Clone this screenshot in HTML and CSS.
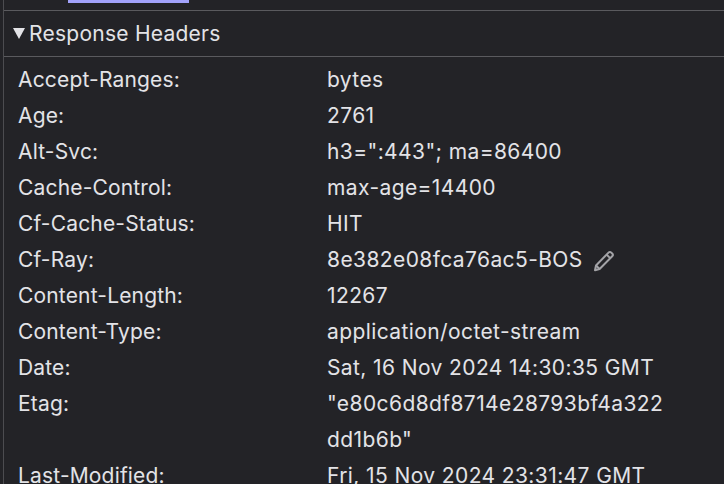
FILE: index.html
```html
<!DOCTYPE html>
<html lang="en">
<head>
<meta charset="utf-8">
<title>Response Headers</title>
<link rel="stylesheet" href="styles.css">
</head>
<body>
<div class="outer">
  <div class="tabs"><div class="tab-active"></div></div>
  <div class="section-head"><span class="tri"></span><span>Response Headers</span></div>
  <div class="rows">
    <div class="row"><div class="k">Accept-Ranges:</div><div class="v">bytes</div></div>
    <div class="row"><div class="k">Age:</div><div class="v">2761</div></div>
    <div class="row"><div class="k">Alt-Svc:</div><div class="v">h3=":443"; ma=86400</div></div>
    <div class="row"><div class="k">Cache-Control:</div><div class="v">max-age=14400</div></div>
    <div class="row"><div class="k">Cf-Cache-Status:</div><div class="v">HIT</div></div>
    <div class="row"><div class="k">Cf-Ray:</div><div class="v">8e382e08fca76ac5-BOS<svg class="pencil" width="24" height="24" viewBox="0 0 24 24" fill="none" stroke="#a3a3a7" stroke-width="2" stroke-linejoin="round"><path d="M4 16.5 16.5 3.6c.8-.8 2-.8 2.8 0l.9.9c.8.8.8 2 0 2.8L7.6 20l-4.6 1.2z"/><path d="M14.6 5.6l3.8 3.8"/><path d="M4 16.5l3.6 3.5"/></svg></div></div>
    <div class="row"><div class="k">Content-Length:</div><div class="v">12267</div></div>
    <div class="row"><div class="k">Content-Type:</div><div class="v">application/octet-stream</div></div>
    <div class="row"><div class="k">Date:</div><div class="v">Sat, 16 Nov 2024 14:30:35 GMT</div></div>
    <div class="row"><div class="k">Etag:</div><div class="v">"e80c6d8df8714e28793bf4a322<br>dd1b6b"</div></div>
    <div class="row"><div class="k">Last-Modified:</div><div class="v">Fri, 15 Nov 2024 23:31:47 GMT</div></div>
  </div>
</div>
</body>
</html>
```
FILE: styles.css
```css
html, body {
  margin: 0;
  padding: 0;
  width: 724px;
  height: 484px;
  overflow: hidden;
  background: #232327;
}
body {
  font-family: Inter, "Liberation Sans", sans-serif;
  font-size: 21px;
  color: #e3e3e7;
}
.outer {
  margin-left: 3px;
  border-left: 1px solid #4c4c50;
  height: 484px;
}
.tabs {
  height: 10px;
  border-bottom: 1px solid #5a5a5e;
  position: relative;
}
.tab-active {
  position: absolute;
  left: 64px;
  top: 0;
  width: 121px;
  height: 3px;
  background: #a2a2fb;
}
.section-head {
  height: 45px;
  border-bottom: 1px solid #5a5a5e;
  display: flex;
  align-items: center;
  padding-left: 9px;
  gap: 4px;
  letter-spacing: 0.25px;
}
.tri {
  width: 0;
  height: 0;
  border-left: 6px solid transparent;
  border-right: 6px solid transparent;
  border-top: 11px solid #e3e3e7;
}
.rows {
  padding: 5px 0 0 14px;
}
.row {
  display: flex;
  line-height: 36px;
}
.k {
  width: 309px;
  flex: none;
  letter-spacing: 0.17px;
}
.v {
  flex: 1;
  letter-spacing: 0.4px;
}
.pencil {
  vertical-align: -6px;
  margin-left: 9px;
}
```
